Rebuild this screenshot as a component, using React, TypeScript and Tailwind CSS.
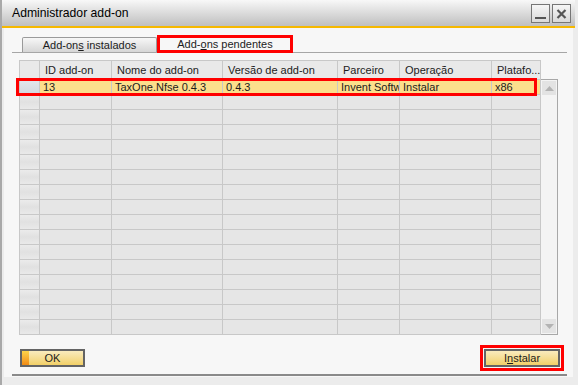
import React from 'react';

const headers = ['', 'ID add-on', 'Nome do add-on', 'Versão de add-on', 'Parceiro', 'Operação', 'Platafo...'];
const firstRow = ['', '13', 'TaxOne.Nfse 0.4.3', '0.4.3', 'Invent Software', 'Instalar', 'x86'];
const emptyRows = Array.from({ length: 16 });

function TitleButton({ kind }: { kind: 'min' | 'close' }) {
  return (
    <div className="w-[19px] h-[19px] border border-[#767676] bg-gradient-to-b from-[#f6f6f6] to-[#d9d9d9] flex items-center justify-center">
      {kind === 'min' ? (
        <div className="w-[11px] h-[2px] bg-[#555] mt-[9px]" />
      ) : (
        <svg width="11" height="10" viewBox="0 0 11 10">
          <path d="M1.5 1 L9.5 9 M9.5 1 L1.5 9" stroke="#555" strokeWidth="2.2" />
        </svg>
      )}
    </div>
  );
}

function Cell({ children, head, className = '' }: { children?: React.ReactNode; head?: boolean; className?: string }) {
  return (
    <div
      className={`border-r border-b border-[#c8c8c8] overflow-hidden whitespace-nowrap flex items-center ${
        head ? 'pl-[5px] bg-[#e9e9e9]' : 'pl-[3px]'
      } ${className}`}
    >
      {children}
    </div>
  );
}

export default function App() {
  return (
    <div className="w-[578px] h-[385px] bg-[#ececec] border-l-2 border-[#a9a9a9] flex flex-col font-['Liberation_Sans',Arial,sans-serif] text-[11px] text-[#1c1c1c] overflow-hidden">
      {/* Title bar */}
      <div className="h-[26px] mr-[3px] bg-gradient-to-b from-[#f8f8f8] to-[#bfbfbf] flex items-center pl-[10px] pr-[4px]">
        <span className="text-[12.2px] text-black flex-1">Administrador add-on</span>
        <div className="flex gap-[2px] mt-[1px]">
          <TitleButton kind="min" />
          <TitleButton kind="close" />
        </div>
      </div>
      <div className="h-[2px] mr-[3px] bg-[#f5b800]" />

      {/* Body */}
      <div className="flex-1 ml-[2px] mr-[5px] mb-[8px] bg-[#f7f7f7] pl-[8px] pr-[6px] flex flex-col">
        {/* Tabs */}
        <div className="mt-[7px] h-[18px] flex items-end border-b border-[#a6a6a6]">
          <div className="w-[10px]" />
          <div className="w-[135px] h-[15px] border border-b-0 border-[#9a9a9a] rounded-t-[2px] bg-gradient-to-b from-[#f7f7f7] to-[#d6d6d6] flex items-center justify-center">
            <span>
              Add-on<span className="underline">s</span> instalados
            </span>
          </div>
          <div className="w-[136px] h-[18px] -mb-px border-[3px] border-[#ff0000] bg-[#f7f7f7] flex items-center justify-center">
            <span>
              Add-<span className="underline">o</span>ns pendentes
            </span>
          </div>
        </div>

        {/* Grid */}
        <div className="mt-[7px] ml-[7px] flex">
          <div className="relative">
            <div className="grid grid-cols-[20px_72px_111px_115px_62px_92px_49px] border-l border-t border-[#c8c8c8] bg-[#e6e6e6]">
              {headers.map((h, i) => (
                <Cell key={`h${i}`} head className="h-[19px]">
                  {h}
                </Cell>
              ))}
              {firstRow.map((v, i) => (
                <Cell
                  key={`r${i}`}
                  className={`h-[15px] ${i === 0 ? 'bg-gradient-to-b from-[#e3e6ec] to-[#d3d8e0]' : 'bg-[#fcdf8c]'}`}
                >
                  {v}
                </Cell>
              ))}
              {emptyRows.map((_, r) =>
                headers.map((_, i) => (
                  <Cell
                    key={`e${r}-${i}`}
                    className={`h-[15px] ${i === 0 ? 'bg-gradient-to-b from-[#ebebeb] via-[#e1e1e1] to-[#e9e9e9]' : ''}`}
                  />
                ))
              )}
            </div>
            {/* highlight of selected row */}
            <div className="absolute left-[-3px] top-[18px] w-[521px] h-[18px] border-[3px] border-[#ff0000]" />
          </div>

          {/* Scrollbar */}
          <div className="mt-[19px] w-[17px] h-[256px] border-t border-r border-b border-[#a8a8a8] bg-[#f4f4f4] flex flex-col justify-between p-[1px]">
            <div className="h-[14px] bg-[#e3e3e3] flex items-center justify-center">
              <svg width="9" height="5" viewBox="0 0 9 5">
                <path d="M0 5 L4.5 0 L9 5 Z" fill="#b3b3b3" />
              </svg>
            </div>
            <div className="h-[14px] bg-[#e3e3e3] flex items-center justify-center">
              <svg width="9" height="5" viewBox="0 0 9 5">
                <path d="M0 0 L4.5 5 L9 0 Z" fill="#b3b3b3" />
              </svg>
            </div>
          </div>
        </div>

        {/* Buttons */}
        <div className="mt-[10px] flex items-center justify-between pl-[8px] pr-[3px]">
          <button className="w-[65px] h-[18px] border-2 border-[#646464] flex bg-gradient-to-b from-[#f9ebbd] to-[#f2d066]">
            <div className="w-[7px] h-full bg-gradient-to-b from-[#fcd44a] to-[#f08a12]" />
            <span className="flex-1 -ml-[7px] leading-[14px]">OK</span>
          </button>
          <div className="border-[3px] border-[#ff0000] p-px">
            <button className="w-[76px] h-[18px] border-2 border-[#646464] bg-gradient-to-b from-[#f9ebbd] to-[#f2d066] leading-[14px]">
              I<span className="underline">n</span>stalar
            </button>
          </div>
        </div>

        <div className="mt-[3px] h-[2px] bg-[#8a8a8a]" />
      </div>
    </div>
  );
}
